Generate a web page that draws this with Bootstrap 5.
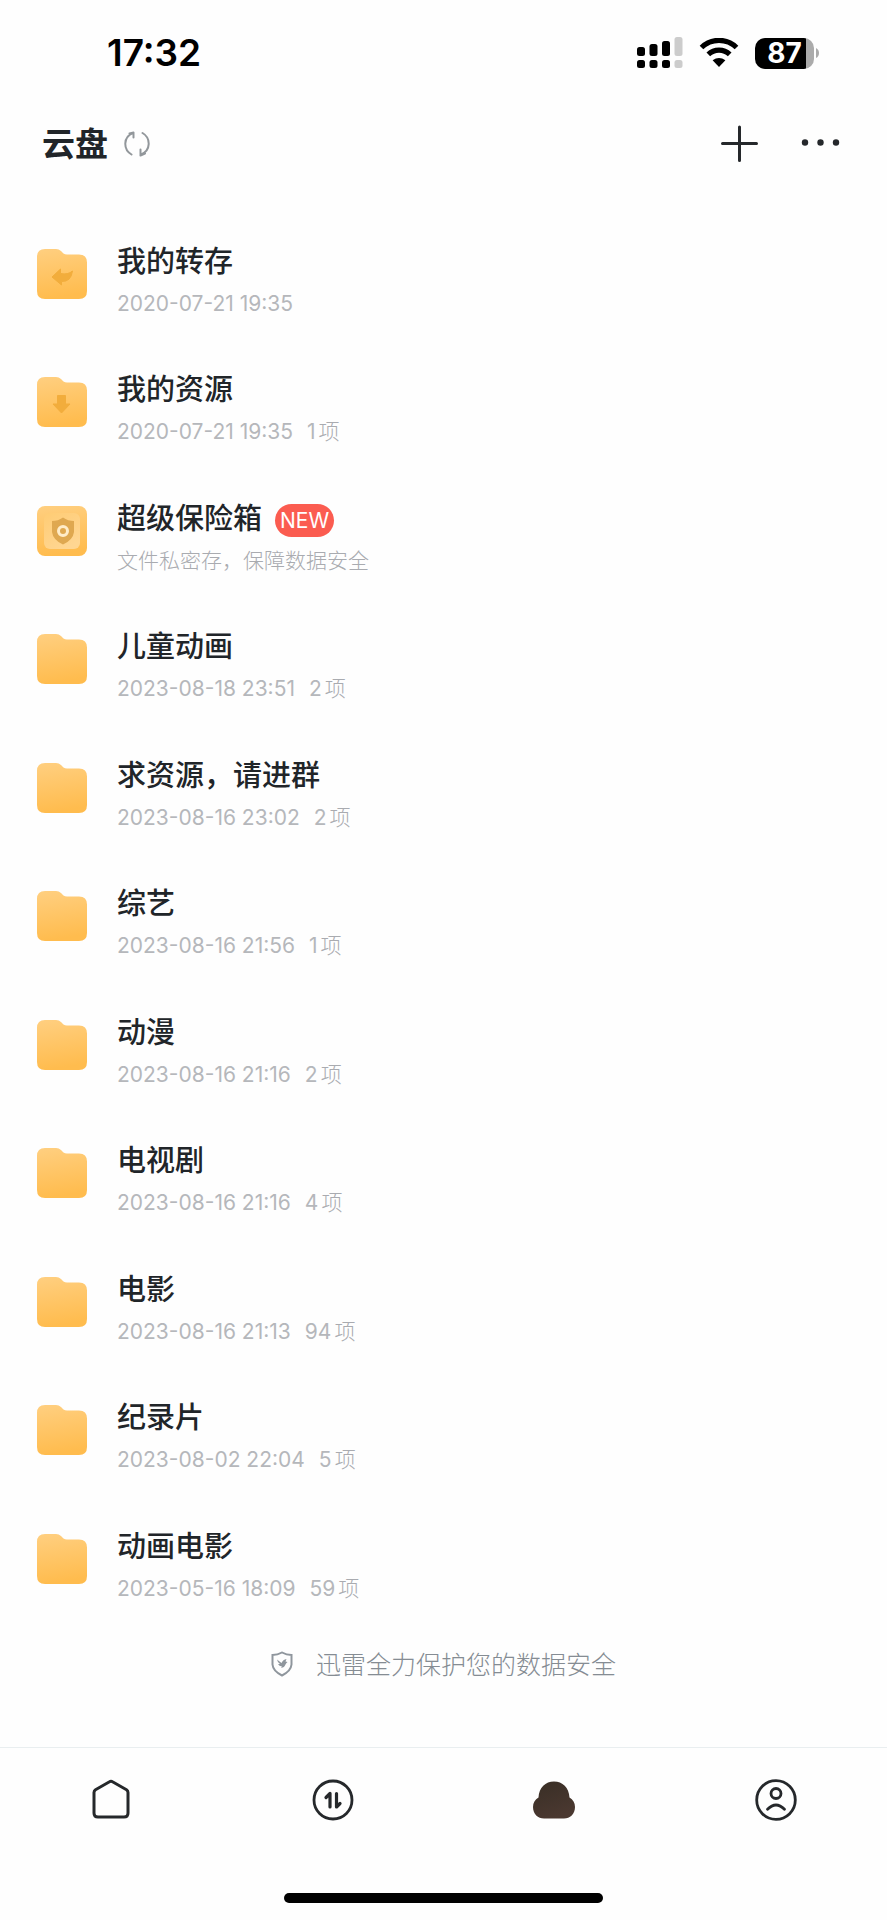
<!DOCTYPE html>
<html lang="zh-CN">
<head>
<meta charset="utf-8">
<meta name="viewport" content="width=device-width, initial-scale=1">
<title>云盘</title>
<link href="https://cdn.jsdelivr.net/npm/bootstrap@5.3.0/dist/css/bootstrap.min.css" rel="stylesheet">
<style>
  body { font-family: Inter, "Noto Sans CJK SC", sans-serif; color: #212529; background: #fefefe; }
  svg { display: block; flex: none; }
  a { color: inherit; text-decoration: none; }
  .status-bar { height: 104px; padding: 2px 68px 0 107px; color: #000; }
  .clock { font-size: 37px; font-weight: 600; line-height: 40px; }
  .battery { width: 59px; height: 31px; border-radius: 10px; color: #fff; font-size: 28px; font-weight: 700; line-height: 31px;
    background: linear-gradient(90deg, #000 87%, #ababab 87%); }
  .battery-tip { margin-left: 2px; }
  .drive-head { height: 80px; padding: 0 47px 0 42px; }
  .drive-head h1 { font-size: 33px; font-weight: 700; line-height: 40px; }
  .icon-btn { padding: 0; border: 0; background: none; color: inherit; }
  .more-btn { margin-left: 43px; }
  .files { margin-top: 33px; }
  .file-row { padding: 25px 37px 0; gap: 30px; }
  .file-row svg { margin-top: 7px; }
  .file-name { font-size: 29px; font-weight: 500; line-height: 40px; }
  .file-meta { font-size: 21px; font-weight: 400; line-height: 30px; margin-top: 7px; color: #b5b7bb; }
  .file-meta.note { font-weight: 300; color: #a9abb0; }
  .count { margin-left: 14px; }
  .unit { margin-left: 3px; font-weight: 300; color: #a9abb0; }
  .new-tag { font-size: 21px; font-weight: 400; line-height: 33px; margin: 3px 0 0 13px; padding: 0 5px; color: #fff; background: #fb5c50; }
  .pledge { height: 117px; padding-top: 17px; gap: 23px; color: #858c93; font-size: 25px; font-weight: 300; line-height: 36px; }
  .tab-bar { height: 173px; border-top: 1px solid #e9eef0; }
  .tab-bar a { padding: 31px 0; }
  .home-bar { left: 32%; right: 32%; bottom: 17px; height: 10px; background: #000; }
</style>
</head>
<body>
<svg width="0" height="0" class="position-absolute" aria-hidden="true">
  <defs>
    <linearGradient id="gold" x1="0" y1="0" x2="0.15" y2="1">
      <stop offset="0" stop-color="#ffcf80"/><stop offset="1" stop-color="#ffbc4e"/>
    </linearGradient>
    <linearGradient id="pane" x1="0" y1="0" x2="0.6" y2="1">
      <stop offset="0" stop-color="#ffcc74"/><stop offset="1" stop-color="#ffd692"/>
    </linearGradient>
    <linearGradient id="cocoa" x1="0" y1="0" x2="0.4" y2="1">
      <stop offset="0" stop-color="#382e25"/><stop offset="1" stop-color="#4a3830"/>
    </linearGradient>
    <symbol id="folder" viewBox="0 0 50 50">
      <path fill="url(#gold)" d="M8 0H19Q22 0 24 2L26.500 4.500Q28 5.500 30 5.500H42Q50 5.500 50 13.500V42Q50 50 42 50H8Q0 50 0 42V8Q0 0 8 0Z"/>
    </symbol>
  </defs>
</svg>

<div class="d-flex flex-column min-vh-100">
  <div class="status-bar d-flex justify-content-between align-items-center">
    <div class="clock">17:32</div>
    <div class="d-flex align-items-center">
      <svg width="46" height="32" viewBox="0 0 46 32" fill="#000" aria-hidden="true">
        <rect x="0" y="10" width="8" height="9" rx="2.500"/><rect x="12.500" y="7" width="8" height="12" rx="2.500"/><rect x="25" y="4" width="8" height="15" rx="2.500"/>
        <rect x="0" y="23" width="8" height="8" rx="2.500"/><rect x="12.500" y="23" width="8" height="8" rx="2.500"/><rect x="25" y="23" width="8" height="8" rx="2.500"/>
        <g fill="#ccc"><rect x="37.500" y="0" width="8" height="19" rx="2.500"/><rect x="37.500" y="23" width="8" height="8" rx="2.500"/></g>
      </svg>
      <svg class="ms-3" width="40" height="30" viewBox="0 0 40 30" aria-hidden="true">
        <path d="M2.500 9.500A25 25 0 0 1 37.500 9.500M9.300 16.400A15.300 15.300 0 0 1 30.700 16.400" fill="none" stroke="#000" stroke-width="5.200"/>
        <path d="M13.600 22.300Q20 17.500 26.400 22.300L20 29Z"/>
      </svg>
      <div class="d-flex align-items-center ms-3">
        <div class="battery text-center">87</div>
        <svg class="battery-tip" width="3" height="10" viewBox="0 0 3 10" aria-hidden="true"><path fill="#ababab" d="M0 0Q3 1.500 3 5T0 10Z"/></svg>
      </div>
    </div>
  </div>

  <header class="drive-head d-flex justify-content-between align-items-center">
    <div class="d-flex align-items-center gap-3">
      <h1 class="m-0">云盘</h1>
      <button class="icon-btn" type="button" aria-label="刷新">
        <svg width="26" height="26" viewBox="0 0 26 26" fill="none" stroke="#92979b" stroke-width="2" stroke-linecap="round" stroke-linejoin="round">
          <path d="M7.500 23.500C-1 18.500-1 6 9 2M5.500 2.500L9.500 1.500V6.500M18.500 2C27 7 27 19.500 17 23.500M21 22.500L16.500 24.500V18.500"/>
        </svg>
      </button>
    </div>
    <div class="d-flex align-items-center">
      <button class="icon-btn" type="button" aria-label="新建">
        <svg width="38" height="38" viewBox="0 0 38 38" stroke="#25282b" stroke-width="3" stroke-linecap="round"><path d="M2.500 18.500H36.500M19.500 2V35.500"/></svg>
      </button>
      <button class="icon-btn more-btn" type="button" aria-label="更多">
        <svg width="39" height="38" viewBox="0 0 39 38" fill="#25282b"><circle cx="4" cy="17.500" r="3.200"/><circle cx="19.500" cy="17.500" r="3.200"/><circle cx="35" cy="17.500" r="3.200"/></svg>
      </button>
    </div>
  </header>

  <main class="files flex-grow-1 d-flex flex-column">
    <a class="file-row d-flex flex-fill" href="#">
      <svg width="50" height="50" viewBox="0 0 50 50"><use href="#folder"/><path fill="#f2ad3c" stroke="#f2ad3c" stroke-linejoin="round" d="M15 28L23.500 20V24.500Q31 26 35.500 22Q34 33 24.500 32.500V36Z"/></svg>
      <div><div class="file-name">我的转存</div><div class="file-meta">2020-07-21 19:35</div></div>
    </a>
    <a class="file-row d-flex flex-fill" href="#">
      <svg width="50" height="50" viewBox="0 0 50 50"><use href="#folder"/><path fill="#f2ad3c" stroke="#f2ad3c" stroke-linejoin="round" d="M20.500 18.500H28.500V27H33L24.500 36L16 27H20.500Z"/></svg>
      <div><div class="file-name">我的资源</div><div class="file-meta">2020-07-21 19:35<span class="count">1</span><span class="unit">项</span></div></div>
    </a>
    <a class="file-row d-flex flex-fill" href="#">
      <svg width="50" height="50" viewBox="0 0 50 50">
        <rect width="50" height="50" rx="8" fill="url(#gold)"/><rect x="7" y="7" width="36" height="36" rx="6" fill="url(#pane)"/>
        <path fill="#dfa850" d="M26 11.500Q31 15 37 15V26Q36 34 26 38.500Q16 34 15 26V15Q21 15 26 11.500Z"/>
        <circle cx="26" cy="25" r="4.500" fill="none" stroke="#ffecc8" stroke-width="3"/>
      </svg>
      <div><div class="d-flex align-items-center"><div class="file-name">超级保险箱</div><span class="new-tag rounded-pill">NEW</span></div><div class="file-meta note">文件私密存，保障数据安全</div></div>
    </a>
    <a class="file-row d-flex flex-fill" href="#">
      <svg width="50" height="50"><use href="#folder"/></svg>
      <div><div class="file-name">儿童动画</div><div class="file-meta">2023-08-18 23:51<span class="count">2</span><span class="unit">项</span></div></div>
    </a>
    <a class="file-row d-flex flex-fill" href="#">
      <svg width="50" height="50"><use href="#folder"/></svg>
      <div><div class="file-name">求资源，请进群</div><div class="file-meta">2023-08-16 23:02<span class="count">2</span><span class="unit">项</span></div></div>
    </a>
    <a class="file-row d-flex flex-fill" href="#">
      <svg width="50" height="50"><use href="#folder"/></svg>
      <div><div class="file-name">综艺</div><div class="file-meta">2023-08-16 21:56<span class="count">1</span><span class="unit">项</span></div></div>
    </a>
    <a class="file-row d-flex flex-fill" href="#">
      <svg width="50" height="50"><use href="#folder"/></svg>
      <div><div class="file-name">动漫</div><div class="file-meta">2023-08-16 21:16<span class="count">2</span><span class="unit">项</span></div></div>
    </a>
    <a class="file-row d-flex flex-fill" href="#">
      <svg width="50" height="50"><use href="#folder"/></svg>
      <div><div class="file-name">电视剧</div><div class="file-meta">2023-08-16 21:16<span class="count">4</span><span class="unit">项</span></div></div>
    </a>
    <a class="file-row d-flex flex-fill" href="#">
      <svg width="50" height="50"><use href="#folder"/></svg>
      <div><div class="file-name">电影</div><div class="file-meta">2023-08-16 21:13<span class="count">94</span><span class="unit">项</span></div></div>
    </a>
    <a class="file-row d-flex flex-fill" href="#">
      <svg width="50" height="50"><use href="#folder"/></svg>
      <div><div class="file-name">纪录片</div><div class="file-meta">2023-08-02 22:04<span class="count">5</span><span class="unit">项</span></div></div>
    </a>
    <a class="file-row d-flex flex-fill" href="#">
      <svg width="50" height="50"><use href="#folder"/></svg>
      <div><div class="file-name">动画电影</div><div class="file-meta">2023-05-16 18:09<span class="count">59</span><span class="unit">项</span></div></div>
    </a>
  </main>

  <div class="pledge d-flex justify-content-center">
    <svg class="mt-1" width="22" height="26" viewBox="0 0 22 26" aria-hidden="true">
      <path d="M11 1.500Q15.500 4 20.500 4V13.500Q20 20 11 24.500Q2 20 1.500 13.500V4Q6.500 4 11 1.500Z" fill="none" stroke="#8f969d" stroke-width="2"/>
      <path fill="#8f969d" d="M6 8.500L10.500 12Q12 8.500 15.500 8L14.500 10.500L16.500 11Q15 12 14.500 13.500Q13.500 16.500 10 17L11 15.500Q8 15 7 13L9 13Q6.500 11.500 6 8.500Z"/>
    </svg>
    <span>迅雷全力保护您的数据安全</span>
  </div>

  <nav class="tab-bar position-relative" aria-label="主导航">
    <div class="row g-0">
      <a class="col d-flex justify-content-center" href="#" aria-label="首页">
        <svg width="42" height="42" viewBox="0 0 42 42" fill="none" stroke="#25282b" stroke-width="3" stroke-linejoin="round"><path d="M19.500 2.800Q21 1.800 22.500 2.800L36.500 10.800Q38 11.800 38 13.500V34Q38 38 34 38H8Q4 38 4 34V13.500Q4 11.800 5.500 10.800Z"/></svg>
      </a>
      <a class="col d-flex justify-content-center" href="#" aria-label="传输">
        <svg width="42" height="42" viewBox="0 0 42 42" fill="none" stroke="#25282b" stroke-width="2.800" stroke-linecap="round" stroke-linejoin="round"><circle cx="21" cy="21" r="19"/><path stroke-width="3.200" d="M14 18.500L18 14.500V28M24.500 14.500V28L28 24.500"/></svg>
      </a>
      <a class="col d-flex justify-content-center" href="#" aria-label="云盘" aria-current="page">
        <svg width="42" height="42" viewBox="0 0 42 42"><path fill="url(#cocoa)" d="M21 2.500C29.500 2.500 36 8.500 36.500 18.500C40 20.500 42 24 42 28C42 35 37 39.500 31 39.500H11C5 39.500 0 35 0 28C0 24 2 20.500 5.500 18.500C6 8.500 12.500 2.500 21 2.500Z"/></svg>
      </a>
      <a class="col d-flex justify-content-center" href="#" aria-label="我的">
        <svg width="42" height="42" viewBox="0 0 42 42" fill="none" stroke="#25282b" stroke-width="2.800" stroke-linecap="round"><circle cx="21" cy="21" r="19.300"/><circle cx="21" cy="14.500" r="5"/><path d="M12.500 30.300Q21 21.700 29.500 30.300"/></svg>
      </a>
    </div>
    <div class="home-bar position-absolute rounded-pill"></div>
  </nav>
</div>
<script src="https://cdn.jsdelivr.net/npm/bootstrap@5.3.0/dist/js/bootstrap.bundle.min.js"></script>
</body>
</html>
